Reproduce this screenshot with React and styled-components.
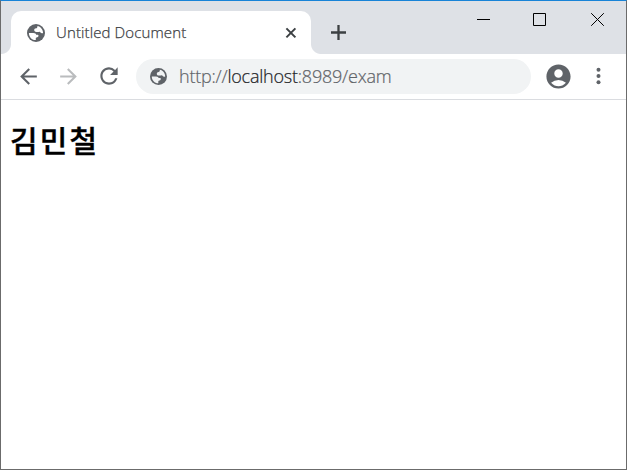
import React from "react";
import styled, { createGlobalStyle } from "styled-components";
import { MdArrowBack, MdArrowForward, MdRefresh, MdAccountCircle } from "react-icons/md";

const GlobalStyle = createGlobalStyle`
  * { box-sizing: border-box; }
  body { margin: 0; background: #fff; overflow: hidden; }
  svg { display: block; flex: none; }
`;

const Window = styled.div`
  width: 627px;
  height: 470px;
  display: flex;
  flex-direction: column;
  background: #fff;
  border: 1px solid #6b6b6b;
  border-top-color: #1883d7;
  font-family: "Open Sans", "Noto Sans CJK KR", sans-serif;
`;

const TitleBar = styled.header`
  height: 53px;
  flex: none;
  display: flex;
  background: #dee1e6;
`;

const Tab = styled.div`
  position: relative;
  width: 300px;
  height: 43px;
  margin: 10px 0 0 10px;
  padding: 0 14px 0 16px;
  display: flex;
  align-items: center;
  background: #fff;
  border-radius: 10px 10px 0 0;
  color: #5f6368;

  &::before,
  &::after {
    content: "";
    position: absolute;
    bottom: 0;
    width: 10px;
    height: 10px;
  }
  &::before {
    left: -10px;
    background: radial-gradient(circle at 0 0, transparent 9.5px, #fff 10.5px);
  }
  &::after {
    right: -10px;
    background: radial-gradient(circle at 100% 0, transparent 9.5px, #fff 10.5px);
  }
`;

const TabTitle = styled.span`
  flex: 1;
  margin: -2px 0 0 11px;
  font-weight: 300;
  font-size: 15px;
  line-height: 20px;
  letter-spacing: 0.12px;
  color: #3c4043;
  -webkit-text-stroke: 0.25px currentColor;
  white-space: nowrap;
`;

const NewTab = styled.div`
  margin: 24px 0 0 20px;
  width: 15px;
  height: 15px;
`;

const Captions = styled.div`
  display: flex;
  margin: 12px 22px 0 auto;
  gap: 43px;
`;

const CloseWindow = styled.span`
  margin-left: 2px;
`;

const Toolbar = styled.div`
  height: 46px;
  flex: none;
  display: flex;
  align-items: center;
  padding: 0 18px 1px 15px;
  border-bottom: 1px solid #dadce0;
  color: #5f6368;
`;

const NavButton = styled.span`
  width: 40px;
  display: flex;
  color: ${(p) => (p.$disabled ? "#babcbe" : "#5f6368")};
`;

const AddressBar = styled.div`
  width: 395px;
  height: 35px;
  margin-top: 1px;
  padding-left: 14px;
  display: flex;
  align-items: center;
  border-radius: 18px;
  background: #f1f3f4;
`;

const Url = styled.span`
  margin: -1px 0 0 12px;
  font-weight: 300;
  font-size: 18px;
  line-height: 24px;
  letter-spacing: -0.22px;
  color: #5f6368;
  -webkit-text-stroke: 0.2px currentColor;
  white-space: nowrap;
`;

const Host = styled.span`
  color: #202124;
`;

const Account = styled.span`
  margin-left: 13px;
`;

const Menu = styled.span`
  margin-left: 23px;
`;

const Page = styled.main`
  flex: 1;
  padding: 18px 9px;
`;

const Name = styled.h1`
  margin: 0;
  font-family: "Noto Sans CJK KR", sans-serif;
  font-size: 30px;
  line-height: 43px;
  font-weight: 500;
  letter-spacing: 2.2px;
  color: #000;
  -webkit-text-stroke: 0.4px currentColor;
`;

function Globe({ size, land }) {
  return (
    <svg width={size} height={size} viewBox="0 0 18 18">
      <circle cx="9" cy="9" r="9" fill="#5f6368" />
      <path
        fill={land}
        d="M10.4 1.9C13.6 2.5 16 5.4 16.1 8.9C15.2 9.7 13.9 9.3 13.5 8.6C13 7.7 12.6 7.6 11.7 8H9.3C7.9 8 7.2 7.1 7.2 6.1C7.2 5 8 4.4 9 4.3C10.2 4.2 10.5 3 10.4 1.9Z"
      />
      <path
        fill={land}
        d="M1.9 8.9H6.4C8.3 8.9 9 9.7 9.1 10.7H10.7C11.7 10.9 11.8 12.5 10.8 12.9C10 13.2 8.9 13.2 8.8 14.1V16.1C5 16.1 1.9 13 1.9 8.9Z"
      />
    </svg>
  );
}

export default function App() {
  return (
    <>
      <GlobalStyle />
      <Window>
        <TitleBar>
          <Tab>
            <Globe size={18} land="#fff" />
            <TabTitle>Untitled Document</TabTitle>
            <svg width="12" height="12" viewBox="0 0 12 12" stroke="#3c4043" strokeWidth="2">
              <path d="M1.4 1.4 10.4 10.4M10.4 1.4 1.4 10.4" />
            </svg>
          </Tab>
          <NewTab>
            <svg width="15" height="15" viewBox="0 0 15 15" stroke="#3c4043" strokeWidth="2.3">
              <path d="M7.5 0V15M0 7.5H15" />
            </svg>
          </NewTab>
          <Captions>
            <svg width="13" height="13" viewBox="0 0 13 13" stroke="#000">
              <path d="M0 6.5H13" />
            </svg>
            <svg width="13" height="13" viewBox="0 0 13 13" fill="none" stroke="#000">
              <path d="M.5 .5H12.5V12.5H.5Z" />
            </svg>
            <CloseWindow>
              <svg width="13" height="13" viewBox="0 0 13 13" stroke="#000">
                <path d="M.2 .2 12.8 12.8M12.8 .2 .2 12.8" />
              </svg>
            </CloseWindow>
          </Captions>
        </TitleBar>
        <Toolbar>
          <NavButton><MdArrowBack size={25} /></NavButton>
          <NavButton $disabled><MdArrowForward size={25} /></NavButton>
          <NavButton><MdRefresh size={26} /></NavButton>
          <AddressBar>
            <Globe size={17} land="#f1f3f4" />
            <Url>http://<Host>localhost</Host>:8989/exam</Url>
          </AddressBar>
          <Account><MdAccountCircle size={29} /></Account>
          <Menu>
            <svg width="5" height="18" viewBox="0 0 5 18" fill="#5f6368">
              <circle cx="2.5" cy="2.7" r="2" />
              <circle cx="2.5" cy="9" r="2" />
              <circle cx="2.5" cy="15.3" r="2" />
            </svg>
          </Menu>
        </Toolbar>
        <Page>
          <Name>김민철</Name>
        </Page>
      </Window>
    </>
  );
}
